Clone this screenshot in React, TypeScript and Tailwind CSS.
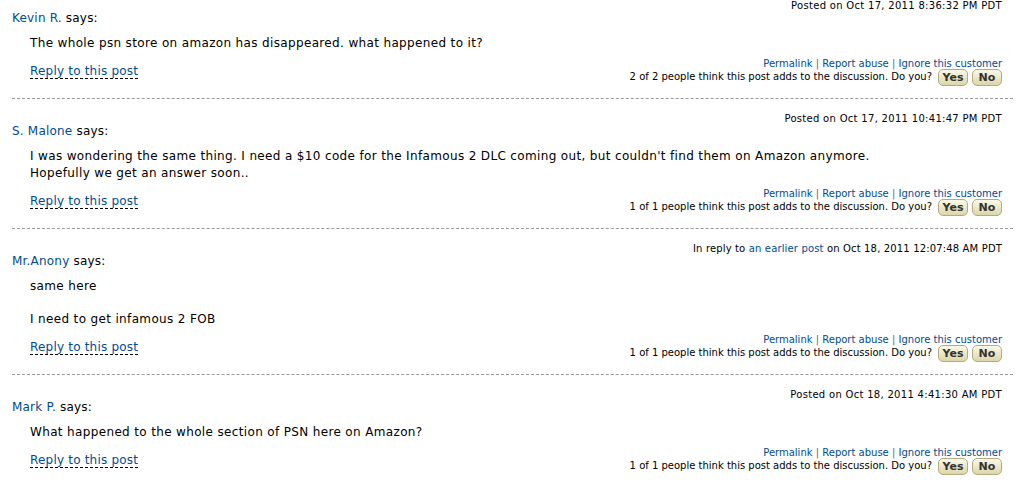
import React from 'react';

type Post = {
  name: string;
  date: React.ReactNode;
  body: React.ReactNode;
  votes: string;
};

const posts: Post[] = [
  {
    name: 'Kevin R.',
    date: 'Posted on Oct 17, 2011 8:36:32 PM PDT',
    body: <div>The whole psn store on amazon has disappeared. what happened to it?</div>,
    votes: '2 of 2 people think this post adds to the discussion. Do you?',
  },
  {
    name: 'S. Malone',
    date: 'Posted on Oct 17, 2011 10:41:47 PM PDT',
    body: (
      <div>
        I was wondering the same thing. I need a $10 code for the Infamous 2 DLC coming out, but couldn't find them on Amazon anymore.
        <br />
        Hopefully we get an answer soon..
      </div>
    ),
    votes: '1 of 1 people think this post adds to the discussion. Do you?',
  },
  {
    name: 'Mr.Anony',
    date: (
      <span className="tracking-[0.15px]">
        In reply to <a className="text-[#004b91]">an earlier post</a> on Oct 18, 2011 12:07:48 AM PDT
      </span>
    ),
    body: (
      <>
        <p>same here</p>
        <p className="mt-[16px]">I need to get infamous 2 FOB</p>
      </>
    ),
    votes: '1 of 1 people think this post adds to the discussion. Do you?',
  },
  {
    name: 'Mark P.',
    date: 'Posted on Oct 18, 2011 4:41:30 AM PDT',
    body: <div>What happened to the whole section of PSN here on Amazon?</div>,
    votes: '1 of 1 people think this post adds to the discussion. Do you?',
  },
];

const VoteButton = ({ label }: { label: string }) => (
  <button className="h-[17px] w-[30px] rounded-[5px] border border-[#b3aa82] bg-gradient-to-b from-[#fbf9e8] to-[#ddd5a8] text-[11px] font-bold leading-[15px] text-[#333]">
    {label}
  </button>
);

const App = () => {
  return (
    <div className="w-[1021px] h-[480px] overflow-hidden bg-white font-['DejaVu_Sans',Verdana,sans-serif] text-black">
      <div className="pl-[12px] pr-[8px]">
        {posts.map((post, i) => (
          <div key={i} className={i === 0 ? '-mt-[1px]' : 'pt-[13px]'}>
            <div className="h-[13px] pr-[11px] text-right text-[10px] leading-[13px] tracking-[0.3px]">{post.date}</div>
            <div className="h-[13px] text-[12px] leading-[13px] tracking-[0.2px]">
              <a className="text-[#004b91]">{post.name}</a> says:
            </div>
            <div className="mt-[10px] pl-[18px] text-[12px] leading-[17px] tracking-[0.35px]">{post.body}</div>
            <div className="mt-[6px] flex h-[26px] items-center justify-between pl-[18px] pr-[11px]">
              <a className="border-b border-dashed border-black text-[12px] leading-[14px] tracking-[0.2px] text-[#004b91]">
                Reply to this post
              </a>
              <div className="flex flex-col items-end text-[10px]">
                <div className="h-[12px] leading-[12px] text-[#004b91]">
                  Permalink <span className="text-[#666]">|</span> Report abuse{' '}
                  <span className="text-[#666]">|</span> Ignore this customer
                </div>
                <div className="flex h-[14px] items-center gap-[4px]">
                  <span className="mr-[2px] leading-[14px]">{post.votes}</span>
                  <VoteButton label="Yes" />
                  <VoteButton label="No" />
                </div>
              </div>
            </div>
            {i < posts.length - 1 && <div className="mt-[14px] border-t border-dashed border-[#999]" />}
          </div>
        ))}
      </div>
    </div>
  );
};

export default App;
